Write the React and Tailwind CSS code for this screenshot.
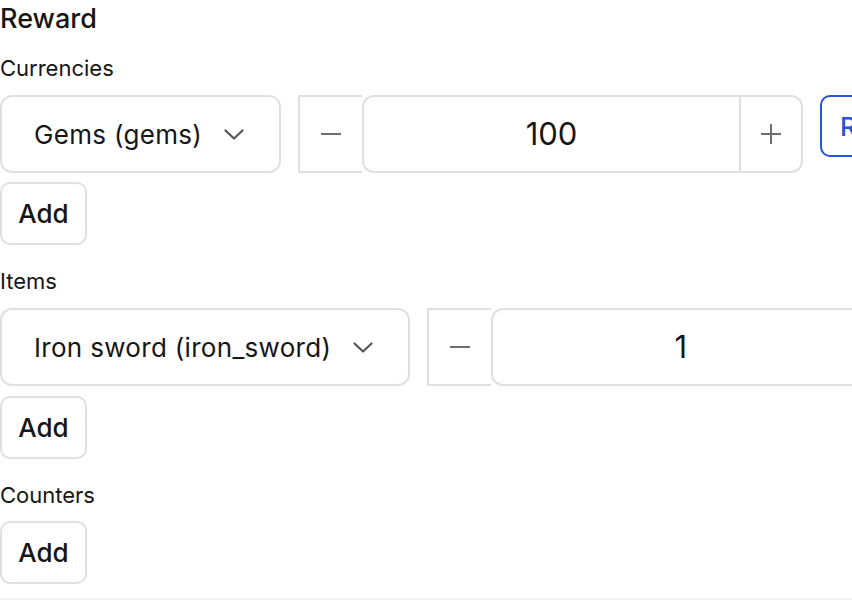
import React, { useState } from 'react';

const Chevron = () => (
  <svg width="20" height="11" viewBox="0 0 20 11" fill="none" stroke="#555" strokeWidth="2.2" strokeLinecap="round" strokeLinejoin="round">
    <path d="M1.5 1.5l8.5 8 8.5-8" />
  </svg>
);

const MinusIcon = () => (
  <svg width="22" height="22" viewBox="0 0 22 22" fill="none" stroke="#6f6f6f" strokeWidth="2">
    <path d="M1 11h20" />
  </svg>
);

const PlusIcon = () => (
  <svg width="22" height="22" viewBox="0 0 22 22" fill="none" stroke="#6f6f6f" strokeWidth="2">
    <path d="M1 11h20M11 1v20" />
  </svg>
);

const AddButton = ({ className = '' }) => (
  <button
    type="button"
    className={`flex h-[63px] w-[87px] items-center justify-center rounded-[10px] border-2 border-[#e0e0e0] bg-white text-[26px] font-medium text-[#161616] ${className}`}
  >
    Add
  </button>
);

const RewardRow = ({ label, initial }) => {
  const [amount, setAmount] = useState(initial);

  return (
    <div className="flex items-start gap-[17px]">
      <button
        type="button"
        className="flex h-[78px] shrink-0 items-center gap-[22px] rounded-[12px] border-2 border-[#e0e0e0] bg-white pl-[32px] pr-[35px] text-[26px] tracking-[0.012em] whitespace-nowrap"
      >
        <span>{label}</span>
        <Chevron />
      </button>
      <div className="flex h-[78px] shrink-0">
        <button
          type="button"
          onClick={() => setAmount(amount - 1)}
          className="flex w-[64px] items-center justify-center border-2 border-r-0 border-[#e0e0e0] bg-white"
        >
          <MinusIcon />
        </button>
        <div className="flex w-[441px] overflow-hidden rounded-[12px] border-2 border-[#e0e0e0] bg-white">
          <input
            type="text"
            value={amount}
            onChange={(e) => setAmount(e.target.value)}
            className="min-w-0 flex-1 bg-transparent text-center text-[31px] text-[#161616] outline-none"
          />
          <button
            type="button"
            onClick={() => setAmount(Number(amount) + 1)}
            className="flex w-[62px] items-center justify-center border-l-2 border-[#e0e0e0]"
          >
            <PlusIcon />
          </button>
        </div>
      </div>
      <button
        type="button"
        className="h-[62px] shrink-0 rounded-[10px] border-2 border-[#2454db] bg-white px-[18px] text-[26px] font-medium text-[#2454db]"
      >
        Remove
      </button>
    </div>
  );
};

const Label = ({ children, className = '' }) => (
  <div className={`h-[28px] text-[22px] leading-[28px] text-[#161616] ${className}`}>{children}</div>
);

export default function App() {
  return (
    <div className="h-[600px] w-[852px] overflow-hidden border-b-2 border-[#f2f2f2] bg-white font-['Inter',sans-serif] text-[#161616]">
      <h2 className="pt-[3px] text-[27px] font-medium leading-[32px]">Reward</h2>

      <Label className="mt-[19px]">Currencies</Label>
      <div className="mt-[13px]">
        <RewardRow label="Gems (gems)" initial={100} />
      </div>
      <AddButton className="mt-[9px]" />

      <Label className="mt-[22px]">Items</Label>
      <div className="mt-[13px]">
        <RewardRow label="Iron sword (iron_sword)" initial={1} />
      </div>
      <AddButton className="mt-[10px]" />

      <Label className="mt-[22px]">Counters</Label>
      <AddButton className="mt-[12px]" />
    </div>
  );
}
